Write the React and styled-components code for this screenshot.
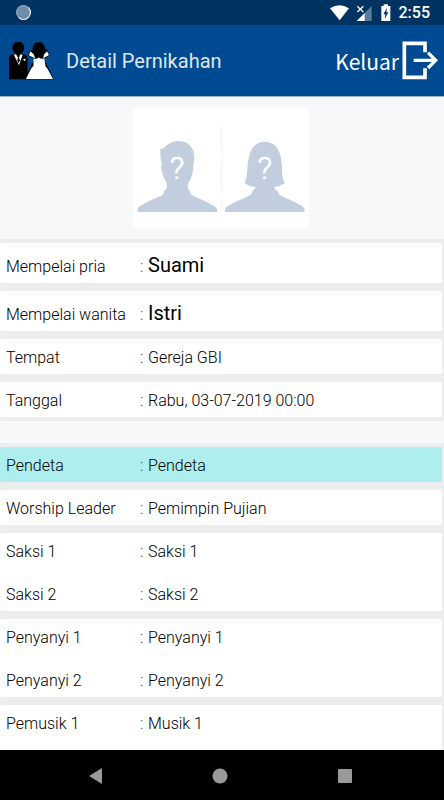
import React from 'react'
import styled, { createGlobalStyle } from 'styled-components'

const couple = [
    [{ label: 'Mempelai pria', value: 'Suami', large: true }],
    [{ label: 'Mempelai wanita', value: 'Istri', large: true }],
    [{ label: 'Tempat', value: 'Gereja GBI' }],
    [{ label: 'Tanggal', value: 'Rabu, 03-07-2019 00:00' }],
]

const servants = [
    [{ label: 'Pendeta', value: 'Pendeta', active: true }],
    [{ label: 'Worship Leader', value: 'Pemimpin Pujian' }],
    [{ label: 'Saksi 1', value: 'Saksi 1' }, { label: 'Saksi 2', value: 'Saksi 2' }],
    [{ label: 'Penyanyi 1', value: 'Penyanyi 1' }, { label: 'Penyanyi 2', value: 'Penyanyi 2' }],
    [{ label: 'Pemusik 1', value: 'Musik 1' }],
]

function StatusIcons() {
    return (
        <svg width="61" height="18" viewBox="323 9 183 54" aria-hidden="true">
            <path d="M323 22 Q351 3 380 22 L352 58 Z" fill="#fff" />
            <path d="M448 15 V60 H403 Z" fill="#5c7b9b" />
            <path d="M427 36 V60 H403 Z" fill="#fff" />
            <path d="M405 16 L423 33 M423 16 L405 33" stroke="#fff" strokeWidth="4" />
            <path d="M484 10 H497 V15 H504 V60 H477 V15 H484 Z" fill="#fff" />
            <path d="M494 20 L483 40 H489 L487 54 L498 34 H492 Z" fill="#003362" />
        </svg>
    )
}

function CoupleIcon() {
    return (
        <svg width="45" height="38" viewBox="27 18 136 115" aria-hidden="true">
            <ellipse cx="55" cy="36" rx="18" ry="19" fill="#000" />
            <path d="M27 131 V68 Q27 55 40 55 H50 V50 H61 V55 H68 Q83 55 83 70 V131 Z" fill="#000" />
            <path d="M42 57 L47 55 L55 60 L63 55 L68 57 L57 88 Z" fill="#fff" />
            <path d="M49 58 H61 L57 64 L60 74 L56 82 L52 74 L54 64 Z" fill="#000" />
            <path d="M69 71 L78 68 L75 76 Z" fill="#fff" />
            <path d="M92 42 L84 58 L104 70 L94 88 L75 131 H162 L142 88 L132 70 L150 58 L141 40 Z" fill="#000" />
            <path d="M92 46 L87 58 L106 68 L102 56 Z M142 46 L148 57 L130 68 L133 56 Z" fill="#fff" />
            <path d="M101 68 Q110 71 117 65 Q124 71 134 68 L137 91 L144 100 L160 130 H78 L94 98 L101 90 Z" fill="#fff" />
            <ellipse cx="117" cy="39" rx="19" ry="21" fill="#000" />
        </svg>
    )
}

function ExitIcon() {
    return (
        <svg width="36" height="39" viewBox="542 124 108 117" aria-hidden="true">
            <path d="M611 158 V131 H549 V233 H611 V206" fill="none" stroke="#fff" strokeWidth="11" />
            <path d="M577 182 H643 M620 159 L643 182 L620 205" fill="none" stroke="#fff" strokeWidth="10" />
        </svg>
    )
}

function Portraits() {
    return (
        <PortraitImage viewBox="0 0 528 354" role="img" aria-label="Foto mempelai">
            <g fill="#c2cede">
                <path d="M13 309 V303 Q14 295 26 288 C46 277 70 267 84 261 Q93 257 93 247 Q98 242 101 237 Q103 222 96 212 Q89 202 88 193 Q84 184 85 168 L87 166 Q81 148 82 119 Q91 121 98 112 Q114 96 138 96 C166 97 184 116 184 145 Q184 158 181 169 Q182 183 178 194 Q175 210 165 223 Q163 232 166 240 Q171 244 171 253 Q175 259 186 263 C204 270 226 281 242 290 Q253 297 253 304 V309 Z" />
                <path d="M276 309 V303 Q277 295 289 288 C309 277 333 269 346 261 Q358 257 358 247 Q364 242 368 234 Q348 232 334 221 C346 204 340 170 348 143 Q359 98 395 98 Q433 98 443 143 C450 171 443 204 456 221 Q445 231 423 234 Q425 242 434 247 Q435 256 447 262 C463 269 486 279 502 288 Q515 296 515 304 V309 Z" />
            </g>
            <path d="M265 44 V312" stroke="#edeff1" strokeWidth="5" strokeDasharray="4 6" />
            <Question x="132" y="209">?</Question>
            <Question x="395" y="209">?</Question>
        </PortraitImage>
    )
}

function Details({ groups, fill }) {
    return (
        <Panel $fill={fill}>
            {groups.map((rows) => (
                <Group key={rows[0].label} $active={rows[0].active}>
                    {rows.map((row) => (
                        <Row key={row.label} $large={row.large}>
                            <Label>{row.label}</Label>
                            <Value $large={row.large}>{row.value}</Value>
                        </Row>
                    ))}
                </Group>
            ))}
        </Panel>
    )
}

function App() {
    return (
        <Screen>
            <GlobalStyle />
            <StatusBar>
                <Spinner />
                <StatusRight>
                    <StatusIcons />
                    <span>2:55</span>
                </StatusRight>
            </StatusBar>
            <Header>
                <CoupleIcon />
                <Title>Detail Pernikahan</Title>
                <LogoutButton type="button">
                    Keluar
                    <ExitIcon />
                </LogoutButton>
            </Header>
            <Content>
                <Hero>
                    <Portraits />
                </Hero>
                <Details groups={couple} />
                <Details groups={servants} fill />
            </Content>
            <NavBar>
                <NavButton type="button" aria-label="Kembali">
                    <svg width="16" height="16" viewBox="0 0 16 16"><path d="M15 0 V16 L2 8 Z" fill="#9a9a9a" /></svg>
                </NavButton>
                <NavButton type="button" aria-label="Beranda">
                    <svg width="16" height="16" viewBox="0 0 16 16"><circle cx="8" cy="8" r="7.5" fill="#9a9a9a" /></svg>
                </NavButton>
                <NavButton type="button" aria-label="Aplikasi terbaru">
                    <svg width="16" height="16" viewBox="0 0 16 16"><rect x="1" y="1" width="14" height="14" rx="1" fill="#9a9a9a" /></svg>
                </NavButton>
            </NavBar>
        </Screen>
    )
}

const GlobalStyle = createGlobalStyle`
    *, *:before, *:after {
        box-sizing: border-box;
    }

    body {
        margin: 0;
        font-family: Roboto, "Liberation Sans", sans-serif;
        background-color: #f6f8fa;
    }

    svg {
        display: block;
        flex-shrink: 0;
    }
`

const Screen = styled.div`
    display: flex;
    flex-direction: column;
    height: 100vh;
`

const StatusBar = styled.div`
    display: flex;
    align-items: center;
    justify-content: space-between;
    flex-shrink: 0;
    height: 25px;
    padding: 0 14px 0 16px;
    background-color: #003362;
`

const Spinner = styled.span`
    width: 15px;
    height: 15px;
    border-radius: 50%;
    border: 1px solid #8ea6bd;
    border-right-color: #fff;
    border-bottom-color: #fff;
    background-color: #6f8dab;
`

const StatusRight = styled.div`
    display: flex;
    align-items: center;
    gap: 8px;
    color: #fff;
    font-size: 16px;
    font-weight: 500;
`

const Header = styled.header`
    display: flex;
    align-items: center;
    flex-shrink: 0;
    height: 72px;
    padding: 0 6px 0 9px;
    background-color: #004a91;
    border-bottom: 1px solid #a5b1d0;
`

const Title = styled.h1`
    flex: 1;
    margin: 0 0 0 12px;
    padding-top: 1px;
    color: #dfe6f0;
    font-size: 20px;
    font-weight: 400;
`

const LogoutButton = styled.button`
    display: flex;
    align-items: center;
    gap: 3px;
    padding: 0;
    border: none;
    background: none;
    color: #fff;
    font-family: "Noto Sans CJK SC", "Noto Sans", sans-serif;
    font-size: 21px;
    line-height: 24px;
    cursor: pointer;
`

const Content = styled.main`
    display: flex;
    flex-direction: column;
    flex: 1;
    min-height: 0;
    overflow: hidden;
`

const Hero = styled.div`
    display: flex;
    justify-content: center;
    padding: 12px 3px 12px 0;
`

const PortraitImage = styled.svg`
    width: 176px;
    height: 118px;
    border-radius: 2px;
    background-color: #fff;
`

const Question = styled.text`
    fill: #fff;
    stroke: #fff;
    stroke-width: 2px;
    font-family: Roboto, sans-serif;
    font-size: 96px;
    font-weight: 300;
    text-anchor: middle;
`

const Group = styled.div`
    display: flex;
    flex-direction: column;
    gap: 8px;
    border-radius: 2px;
    background-color: ${(props) => (props.$active ? '#afeeee' : '#fff')};
`

const Panel = styled.dl`
    display: flex;
    flex-direction: column;
    flex: ${(props) => (props.$fill ? '1' : 'none')};
    gap: 8px;
    margin: ${(props) => (props.$fill ? '22px 0 0' : '0')};
    padding: ${(props) => (props.$fill ? '4px 2px 0 0' : '4px 2px 4px 0')};
    background-color: #ebedee;

    ${Group}:last-child {
        flex: ${(props) => (props.$fill ? '1' : 'none')};
    }
`

const Row = styled.div`
    display: flex;
    align-items: baseline;
    height: ${(props) => (props.$large ? '40px' : '35px')};
    padding: ${(props) => (props.$large ? '10px' : '7px')} 6px 0;
`

const Label = styled.dt`
    width: 134px;
    color: #000;
    font-size: 16px;
    font-weight: 300;
    line-height: 24px;
`

const Value = styled.dd`
    display: flex;
    align-items: baseline;
    margin: 0;
    color: #000;
    font-size: ${(props) => (props.$large ? '20px' : '16px')};
    font-weight: ${(props) => (props.$large ? '400' : '300')};
    line-height: 24px;

    &:before {
        content: ":";
        width: 8px;
        color: #444;
        font-size: 16px;
        font-weight: 300;
    }
`

const NavBar = styled.nav`
    display: flex;
    align-items: center;
    justify-content: center;
    gap: 77px;
    flex-shrink: 0;
    height: 50px;
    padding: 2px 4px 0 0;
    background-color: #000;
`

const NavButton = styled.button`
    display: flex;
    justify-content: center;
    width: 48px;
    padding: 16px 0;
    border: none;
    background: none;
    cursor: pointer;
`

export default App
